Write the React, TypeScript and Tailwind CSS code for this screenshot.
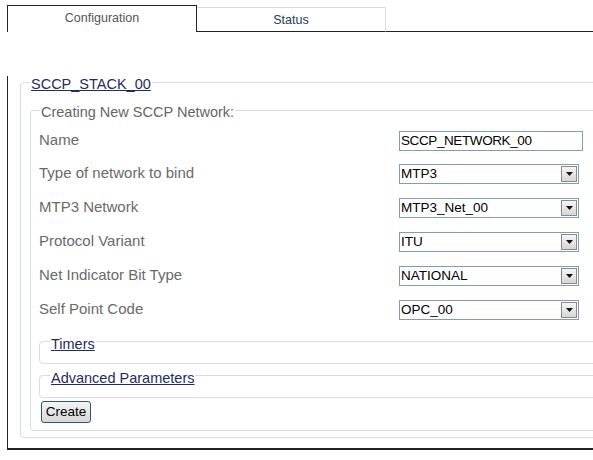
import type { ReactNode } from "react";

const ROWS = [
  { label: "Name", value: "SCCP_NETWORK_00", kind: "input" },
  { label: "Type of network to bind", value: "MTP3", kind: "select" },
  { label: "MTP3 Network", value: "MTP3_Net_00", kind: "select" },
  { label: "Protocol Variant", value: "ITU", kind: "select" },
  { label: "Net Indicator Bit Type", value: "NATIONAL", kind: "select" },
  { label: "Self Point Code", value: "OPC_00", kind: "select" },
];

export default function App() {
  return (
    <div className="h-[460px] w-[593px] overflow-hidden bg-white font-['Liberation_Sans',Arial,sans-serif]">
      <div className="w-[700px] pl-[7px] pt-[5px]">
        {/* Tabs */}
        <div className="flex h-[27px]">
          <div className="h-[27px] w-[190px] border-x border-t border-[#222] bg-white pt-[5px] text-center text-[12.5px] leading-[14px] text-[#555]">
            Configuration
          </div>
          <div className="mt-[2px] h-[25px] w-[189px] border-t border-r border-b border-t-[#dcdcdc] border-r-[#dcdcdc] border-b-[#222] pt-[5px] text-center text-[12.5px] leading-[14px] text-[#1d3b5a]">
            Status
          </div>
          <div className="flex-1 border-b border-[#222]" />
        </div>

        {/* Panel */}
        <div className="border-b-2 border-l border-[#222] pb-[10px]">
          <fieldset className="ml-[12px] mt-[44px] rounded-[4px] border border-[#d5dce3] pb-[6px] pl-[9px]">
            <legend className="h-[13px] px-[1px] text-[14.5px] leading-[16px] text-[#1f2d5c] underline">
              SCCP_STACK_00
            </legend>

            <fieldset className="mt-[15px] rounded-[4px] border border-[#d5dce3] pb-[7px] pl-[8px] pt-[8px]">
              <legend className="ml-[1px] h-[13px] px-[1px] text-[14.5px] leading-[17px] text-[#666]">
                Creating New SCCP Network:
              </legend>

              {ROWS.map((row, i) => (
                <div
                  key={row.label}
                  className={`flex items-center ${i === 0 ? "h-[32px]" : "h-[34px]"}`}
                >
                  <div className="mb-[4px] w-[360px] text-[15px] leading-[17px] text-[#6a6a6a]">
                    {row.label}
                  </div>
                  {row.kind === "input" ? (
                    <div className="flex h-[20px] w-[184px] items-center border border-[#7f9db9] pl-[1px] text-[13.5px] tracking-[-0.4px] text-black">
                      {row.value}
                    </div>
                  ) : (
                    <FakeSelect value={row.value} />
                  )}
                </div>
              ))}

              <SubSection title="Timers" className="mt-[9px]" />
              <SubSection title="Advanced Parameters" className="mt-[6px]" />

              <button className="ml-[2px] mt-[3px] flex h-[22px] w-[50px] items-center justify-center rounded-[3px] border border-[#2c5682] bg-gradient-to-b from-[#f4f4f4] to-[#d8d8d8] text-[13.5px] text-black">
                Create
              </button>
            </fieldset>
          </fieldset>
        </div>
      </div>
    </div>
  );
}

function SubSection({ title, className }: { title: string; className?: string }): ReactNode {
  return (
    <fieldset className={`${className} rounded-[4px] border border-[#d5dce3] pb-[16px] pl-[10px]`}>
      <legend className="h-[11px] px-[1px] text-[14.5px] leading-[17px] text-[#1f2d5c] underline">
        {title}
      </legend>
    </fieldset>
  );
}

function FakeSelect({ value }: { value: string }) {
  return (
    <div className="flex h-[20px] w-[180px] items-center justify-between border border-[#7f9db9] pl-[1px]">
      <span className="text-[13.5px] text-black">{value}</span>
      <span className="mr-[1px] flex h-[16px] w-[16px] items-center justify-center border border-[#8a8a8a] bg-gradient-to-b from-[#f6f6f6] to-[#d6d6d6]">
        <svg width="7" height="4" viewBox="0 0 7 4">
          <polygon points="0,0 7,0 3.5,4" fill="#111" />
        </svg>
      </span>
    </div>
  );
}
